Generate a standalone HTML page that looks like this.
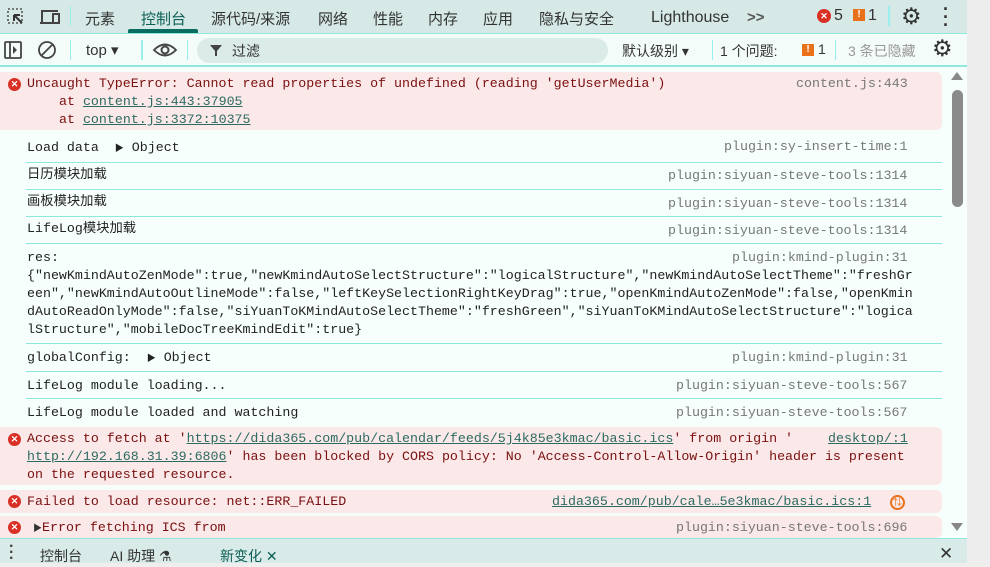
<!DOCTYPE html>
<html><head><meta charset="utf-8"><style>
*{margin:0;padding:0;box-sizing:border-box}
body{width:990px;height:563px;overflow:hidden;background:#eee;position:relative;font-family:"Liberation Sans","Noto Sans CJK SC",sans-serif}
.a{position:absolute;white-space:nowrap}
.m{font-family:"Liberation Mono","Noto Sans CJK SC",monospace;font-size:13.3px;color:#222;line-height:18px}
.src{color:#777}
.lnk{color:#2b6b62;text-decoration:underline}
.err{color:#7a1010}
.sep{position:absolute;left:26px;width:916px;height:1px;background:#8fe8dc}
.pink{position:absolute;left:0;width:942px;background:#fbe8e8;border-radius:0 6px 6px 0}
.x{position:absolute;width:13px;height:13px;border-radius:50%;background:#d93025;color:#fff;font:bold 9px/13px "Liberation Sans",sans-serif;text-align:center}
.tab{position:absolute;top:8px;font-size:15px;color:#333}
</style></head><body>
<div class="a" style="left:967px;top:0;width:23px;height:563px;background:#ededed"></div>
<div class="a" style="left:0;top:0;width:967px;height:33px;background:#d6e9e7"></div>
<svg class="a" style="left:4px;top:6px" width="60" height="22">
<rect x="4" y="3" width="14" height="14" fill="none" stroke="#555" stroke-width="1.6" stroke-dasharray="2 2"/>
<path d="M10 9 L18 17 M10 9 V15 M10 9 H16" stroke="#333" stroke-width="2" fill="none"/>
<path d="M38 16 V5 H54 M36 17 H50" stroke="#444" stroke-width="2" fill="none"/><rect x="49" y="8" width="6" height="9" fill="none" stroke="#444" stroke-width="2"/>
</svg>
<div class="a" style="left:70px;top:6px;width:1px;height:20px;background:#9ee"></div>
<div class="tab" style="left:85px">元素</div>
<div class="tab" style="left:141px;color:#0b5e55">控制台</div>
<div class="a" style="left:128px;top:29px;width:70px;height:4px;background:#0a6b60;border-radius:2px 2px 0 0"></div>
<div class="tab" style="left:211px">源代码/来源</div>
<div class="tab" style="left:318px">网络</div>
<div class="tab" style="left:373px">性能</div>
<div class="tab" style="left:428px">内存</div>
<div class="tab" style="left:483px">应用</div>
<div class="tab" style="left:539px">隐私与安全</div>
<div class="tab" style="left:651px;top:9px;font-size:16px">Lighthouse</div>
<div class="tab" style="left:747px;top:9px;font-weight:bold;color:#555">&gt;&gt;</div>
<div class="x" style="left:817px;top:9px;width:14px;height:14px;line-height:14px">✕</div>
<div class="tab" style="left:834px;top:7px;font-size:16px">5</div>
<div class="a" style="left:853px;top:9px;width:12px;height:12px;background:#e8711a;color:#fff;font:bold 10px/12px sans-serif;text-align:center">!</div>
<div class="tab" style="left:868px;top:7px;font-size:16px">1</div>
<div class="a" style="left:888px;top:6px;width:2px;height:20px;background:#9ee"></div>
<div class="a" style="left:901px;top:3px;font-size:23px;color:#333">⚙</div>
<div class="a" style="left:943px;top:5px;font-size:18px;font-weight:bold;color:#333;line-height:8px">·<br>·<br>·</div>
<div class="a" style="left:0;top:33px;width:967px;height:1px;background:#8fe8dc"></div>
<div class="a" style="left:0;top:34px;width:967px;height:32px;background:#f4fcfa"></div>
<svg class="a" style="left:3px;top:41px" width="60" height="20">
<rect x="2" y="1" width="16" height="16" rx="1" fill="none" stroke="#444" stroke-width="1.8"/><path d="M7 1 V17" stroke="#444" stroke-width="1.8"/><path d="M10 5 L14 9 L10 13Z" fill="#444"/>
<circle cx="44" cy="9" r="8" fill="none" stroke="#444" stroke-width="1.8"/><path d="M38 15 L50 3" stroke="#444" stroke-width="1.8"/>
</svg>
<div class="a" style="left:70px;top:40px;width:1px;height:20px;background:#9ee"></div>
<div class="a" style="left:86px;top:41px;font-size:15px;color:#333">top ▾</div>
<div class="a" style="left:141px;top:40px;width:2px;height:20px;background:#9ee"></div>
<svg class="a" style="left:152px;top:42px" width="26" height="16"><path d="M2 8 Q13 -3 24 8 Q13 19 2 8Z" fill="none" stroke="#444" stroke-width="1.8"/><circle cx="13" cy="8" r="3.5" fill="none" stroke="#444" stroke-width="2"/></svg>
<div class="a" style="left:187px;top:40px;width:1px;height:20px;background:#9ee"></div>
<div class="a" style="left:197px;top:38px;width:411px;height:25px;border-radius:13px;background:#daebe8"></div>
<svg class="a" style="left:209px;top:43px" width="14" height="14"><path d="M1 2 H13 L8 8 V13 H6 V8Z" fill="#444"/></svg>
<div class="a" style="left:232px;top:41px;font-size:14px;color:#333">过滤</div>
<div class="a" style="left:622px;top:41px;font-size:14px;color:#333">默认级别 ▾</div>
<div class="a" style="left:712px;top:40px;width:1px;height:20px;background:#9ee"></div>
<div class="a" style="left:720px;top:41px;font-size:14px;color:#333">1 个问题:</div>
<div class="a" style="left:802px;top:44px;width:12px;height:12px;background:#e8711a;color:#fff;font:bold 10px/12px sans-serif;text-align:center">!</div>
<div class="a" style="left:818px;top:41px;font-size:14px;color:#333">1</div>
<div class="a" style="left:835px;top:40px;width:1px;height:20px;background:#9ee"></div>
<div class="a" style="left:848px;top:41px;font-size:14px;color:#999">3 条已隐藏</div>
<div class="a" style="left:932px;top:35px;font-size:23px;color:#333">⚙</div>
<div class="a" style="left:0;top:65px;width:967px;height:2px;background:#8fe8dc"></div>
<div class="a" style="left:0;top:67px;width:967px;height:471px;background:#f7fffd"></div>
<div class="pink" style="top:72px;height:58px"></div>
<div class="x" style="left:8px;top:78px">✕</div>
<div class="a m err" style="left:27px;top:75px">Uncaught TypeError: Cannot read properties of undefined (reading 'getUserMedia')</div>
<div class="a m src" style="left:796px;top:75px">content.js:443</div>
<div class="a m err" style="left:59px;top:93px">at <span class="lnk">content.js:443:37905</span></div>
<div class="a m err" style="left:59px;top:111px">at <span class="lnk">content.js:3372:10375</span></div>

<div class="a m" style="left:27px;top:139px">Load data &nbsp;<span style="font-size:9px">▶</span> Object</div>
<div class="a m src" style="left:724px;top:138px">plugin:sy-insert-time:1</div>
<div class="sep" style="top:162px"></div>
<div class="a m" style="left:27px;top:166px">日历模块加载</div>
<div class="a m src" style="left:668px;top:167px">plugin:siyuan-steve-tools:1314</div>
<div class="sep" style="top:189px"></div>
<div class="a m" style="left:27px;top:193px">画板模块加载</div>
<div class="a m src" style="left:668px;top:195px">plugin:siyuan-steve-tools:1314</div>
<div class="sep" style="top:216px"></div>
<div class="a m" style="left:27px;top:220px">LifeLog模块加载</div>
<div class="a m src" style="left:668px;top:222px">plugin:siyuan-steve-tools:1314</div>
<div class="sep" style="top:243px"></div>
<div class="a m" style="left:27px;top:249px">res:</div>
<div class="a m src" style="left:732px;top:249px">plugin:kmind-plugin:31</div>
<div class="a m" style="left:27px;top:267px">{"newKmindAutoZenMode":true,"newKmindAutoSelectStructure":"logicalStructure","newKmindAutoSelectTheme":"freshGr<br>een","newKmindAutoOutlineMode":false,"leftKeySelectionRightKeyDrag":true,"openKmindAutoZenMode":false,"openKmin<br>dAutoReadOnlyMode":false,"siYuanToKMindAutoSelectTheme":"freshGreen","siYuanToKMindAutoSelectStructure":"logica<br>lStructure","mobileDocTreeKmindEdit":true}</div>
<div class="sep" style="top:343px"></div>
<div class="a m" style="left:27px;top:349px">globalConfig: &nbsp;<span style="font-size:9px">▶</span> Object</div>
<div class="a m src" style="left:732px;top:349px">plugin:kmind-plugin:31</div>
<div class="sep" style="top:371px"></div>
<div class="a m" style="left:27px;top:377px">LifeLog module loading...</div>
<div class="a m src" style="left:676px;top:377px">plugin:siyuan-steve-tools:567</div>
<div class="sep" style="top:398px"></div>
<div class="a m" style="left:27px;top:404px">LifeLog module loaded and watching</div>
<div class="a m src" style="left:676px;top:404px">plugin:siyuan-steve-tools:567</div>

<div class="pink" style="top:427px;height:58px"></div>
<div class="x" style="left:8px;top:433px">✕</div>
<div class="a m err" style="left:27px;top:430px">Access to fetch at '<span class="lnk">https://dida365.com/pub/calendar/feeds/5j4k85e3kmac/basic.ics</span>' from origin '</div>
<div class="a m lnk" style="left:828px;top:430px">desktop/:1</div>
<div class="a m err" style="left:27px;top:448px"><span class="lnk">http://192.168.31.39:6806</span>' has been blocked by CORS policy: No 'Access-Control-Allow-Origin' header is present</div>
<div class="a m err" style="left:27px;top:466px">on the requested resource.</div>

<div class="pink" style="top:490px;height:23px"></div>
<div class="x" style="left:8px;top:495px">✕</div>
<div class="a m err" style="left:27px;top:493px">Failed to load resource: net::ERR_FAILED</div>
<div class="a m lnk" style="left:552px;top:493px">dida365.com/pub/cale…5e3kmac/basic.ics:1</div>
<div class="a" style="left:890px;top:495px;width:15px;height:15px;border-radius:50%;border:2px solid #e8711a;color:#e8711a;font-size:9px;line-height:11px;text-align:center">⇅</div>

<div class="pink" style="top:516px;height:22px"></div>
<div class="x" style="left:8px;top:521px">✕</div>
<div class="a m err" style="left:33px;top:519px"><span style="font-size:9px;color:#333">▶</span>Error fetching ICS from</div>
<div class="a m src" style="left:676px;top:519px">plugin:siyuan-steve-tools:696</div>

<div class="a" style="left:951px;top:72px;width:0;height:0;border-left:6px solid transparent;border-right:6px solid transparent;border-bottom:8px solid #888"></div>
<div class="a" style="left:952px;top:90px;width:11px;height:117px;border-radius:6px;background:#8a8a8a"></div>
<div class="a" style="left:951px;top:523px;width:0;height:0;border-left:6px solid transparent;border-right:6px solid transparent;border-top:8px solid #888"></div>

<div class="a" style="left:0;top:538px;width:967px;height:1px;background:#8fe8dc"></div>
<div class="a" style="left:0;top:539px;width:967px;height:24px;background:#d9ebe8"></div>
<div class="a" style="left:9px;top:544px;font-size:16px;font-weight:bold;color:#444;line-height:6px">·<br>·<br>·</div>
<div class="a" style="left:40px;top:546px;font-size:14px;color:#333">控制台</div>
<div class="a" style="left:110px;top:546px;font-size:14px;color:#333">AI 助理 ⚗</div>
<div class="a" style="left:220px;top:546px;font-size:14px;color:#0b5e55">新变化 ✕</div>
<div class="a" style="left:939px;top:544px;font-size:17px;color:#333">✕</div>
</body></html>
